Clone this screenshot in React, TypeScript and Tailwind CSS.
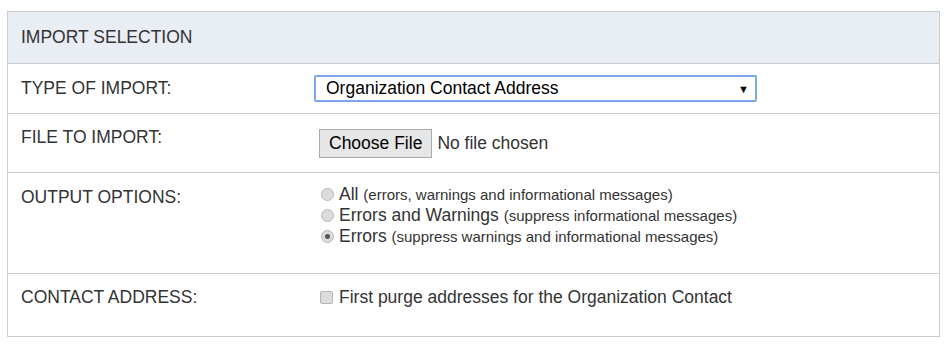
export default function App() {
  const options = [
    { label: "All", note: "(errors, warnings and informational messages)", checked: false },
    { label: "Errors and Warnings", note: "(suppress informational messages)", checked: false },
    { label: "Errors", note: "(suppress warnings and informational messages)", checked: true },
  ];

  return (
    <div className="h-[344px] w-[950px] bg-white pt-[11px] pl-[7px] text-[17.5px] text-[#333] [font-family:'Liberation_Sans',Arial,sans-serif]">
      <div className="w-[933px] border border-[#ccc]">
        <div className="flex h-[52px] items-center border-b border-[#ccc] bg-[#e9edf4] pl-[13px]">IMPORT SELECTION</div>

        <div className="flex h-[50px] items-center border-b border-[#ccc]">
          <div className="w-[306px] pl-[13px]">TYPE OF IMPORT:</div>
          <div className="relative flex h-[27px] w-[443px] items-center rounded-[2px] border-2 border-[#7ea6ef] bg-white pl-[10px] text-black">
            Organization Contact Address
            <span className="absolute right-[6px] top-[4px] text-[11px]">▼</span>
          </div>
        </div>

        <div className="flex h-[59px] items-start border-b border-[#ccc] pt-[10px]">
          <div className="w-[306px] pl-[13px]">FILE TO IMPORT:</div>
          <div className="mt-[5px] ml-[5px] flex items-center gap-[5px]">
            <span className="flex h-[29px] items-center border border-[#a9a9a9] bg-[#e6e6e6] px-[9px] text-black">Choose File</span>
            <span>No file chosen</span>
          </div>
        </div>

        <div className="flex h-[101px] items-start border-b border-[#ccc] pt-[11px]">
          <div className="w-[306px] pl-[13px]">OUTPUT OPTIONS:</div>
          <div className="ml-[7px] flex flex-col">
            {options.map((o) => (
              <div key={o.label} className="flex h-[21px] items-center gap-[5px]">
                <span className="flex h-[13px] w-[13px] items-center justify-center rounded-full border border-[#b5b5b5] bg-[#dcdcdc]">
                  {o.checked ? <span className="h-[5px] w-[5px] rounded-full bg-[#555]" /> : null}
                </span>
                <span>
                  {o.label} <span className="text-[15px]">{o.note}</span>
                </span>
              </div>
            ))}
          </div>
        </div>

        <div className="flex h-[62px] items-start pt-[10px]">
          <div className="w-[306px] pl-[13px]">CONTACT ADDRESS:</div>
          <div className="ml-[6px] flex items-center gap-[6px]">
            <span className="h-[13px] w-[13px] rounded-[2px] border border-[#b5b5b5] bg-[#dcdcdc]" />
            <span>First purge addresses for the Organization Contact</span>
          </div>
        </div>
      </div>
    </div>
  );
}
